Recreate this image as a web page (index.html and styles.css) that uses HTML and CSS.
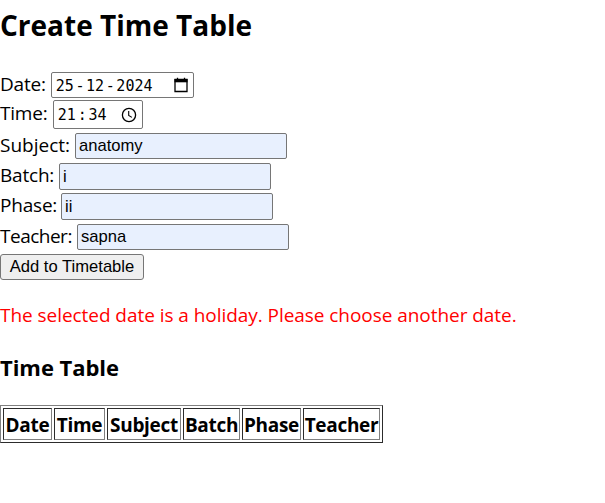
FILE: index.html
```html
<!DOCTYPE html>
<html lang="en">
<head>
<meta charset="utf-8">
<title>Create Time Table</title>
<link rel="stylesheet" href="styles.css">
</head>
<body>
<h2 class="title">Create Time Table</h2>
<form class="form">
  <div class="row date"><label>Date:</label><div class="picker"><span>25</span><span>-</span><span>12</span><span>-</span><span>2024</span>
    <svg class="icon" width="16" height="16" viewBox="0 0 16 16"><path d="M2 2.5h12v12H2zM4.5 .8v2M11.5 .8v2" fill="none" stroke="#000" stroke-width="1.3"/><path d="M1.5 2h13v3.3h-13z"/></svg></div></div>
  <div class="row time"><label>Time:</label><div class="picker"><span>21</span><span class="colon">:</span><span>34</span>
    <svg class="icon" width="16" height="16" viewBox="0 0 16 16"><circle cx="8" cy="8" r="6.6" fill="none" stroke="#000" stroke-width="1.3"/><path d="M7.7 4v4.4l3.2 2" fill="none" stroke="#000" stroke-width="1.1"/></svg></div></div>
  <div class="row subject"><label>Subject:</label><input class="field" type="text" value="anatomy"></div>
  <div class="row batch"><label>Batch:</label><input class="field" type="text" value="i"></div>
  <div class="row phase"><label>Phase:</label><input class="field" type="text" value="ii"></div>
  <div class="row teacher"><label>Teacher:</label><input class="field" type="text" value="sapna"></div>
  <button class="add" type="button">Add to Timetable</button>
</form>
<p class="error">The selected date is a holiday. Please choose another date.</p>
<h3 class="subtitle">Time Table</h3>
<table class="table">
  <colgroup><col class="c1"><col class="c2"><col class="c3"><col class="c4"><col class="c5"><col class="c6"></colgroup>
  <tr><th>Date</th><th>Time</th><th>Subject</th><th>Batch</th><th>Phase</th><th>Teacher</th></tr>
</table>
</body>
</html>
```
FILE: styles.css
```css
* { box-sizing: border-box; }
body { margin: 0; padding-top: 6px; background: #fff; color: #000; font-family: "Open Sans", "Noto Sans", sans-serif; font-size: 19px; white-space: nowrap; }
.title { margin: 0 0 28px; font-size: 28px; line-height: 38px; font-weight: 700; letter-spacing: 0; }
.form { display: flex; flex-direction: column; align-items: flex-start; }
.row { display: flex; height: 26px; margin-bottom: 4px; }
.row label { flex: none; line-height: 24px; letter-spacing: -0.2px; }
.date { margin-bottom: 2px; }
.time { height: 29px; }
.batch { height: 27px; margin-bottom: 3px; }
.phase { height: 27px; }
.date label { width: 51px; }
.time label { width: 53px; line-height: 26px; }
.subject label { width: 75px; letter-spacing: 0; }
.batch label { width: 59px; }
.phase label { width: 61px; }
.teacher label { width: 77px; letter-spacing: -0.5px; }
.picker { display: flex; align-items: center; width: 143px; padding: 0 4px 0 3px; border: 1px solid #767676; border-radius: 2px; font: 15px "DejaVu Sans Mono", monospace; }
.picker span { padding: 1px 0.8px 0; }
.picker .colon { padding: 0 1px; }
.time .picker { width: 90px; padding-right: 5px; }
.icon { margin-left: auto; }
.field { width: 212px; margin: 0; padding: 0 3px; border: 1px solid #767676; border-radius: 2px; background: #e8f0fe; color: #000; font: 16.6px "Liberation Sans", Arial, sans-serif; }
.add { width: 144px; height: 26px; margin: 0; padding: 0; border: 1px solid #767676; border-radius: 3px; background: #efefef; color: #000; font: 16.6px "Liberation Sans", Arial, sans-serif; }
.error { margin: 22px 0 25px; color: #f00; line-height: 26px; letter-spacing: -0.05px; }
.subtitle { margin: 0 0 24px; font-size: 22px; line-height: 28px; letter-spacing: -0.05px; }
.table { table-layout: fixed; width: 383px; height: 38px; border: 1px solid; border-color: #808080 #2c2c2c #2c2c2c #808080; border-collapse: separate; border-spacing: 2px; }
.table th { padding: 2px 0 0; height: 32px; border: 1px solid; border-color: #2c2c2c #808080 #808080 #2c2c2c; font-size: 19px; line-height: 26px; letter-spacing: -0.3px; }
.c1 { width: 49px; }
.c2 { width: 51px; }
.c3 { width: 74px; }
.c4 { width: 57px; }
.c5 { width: 59px; }
.c6 { width: 77px; }
```
